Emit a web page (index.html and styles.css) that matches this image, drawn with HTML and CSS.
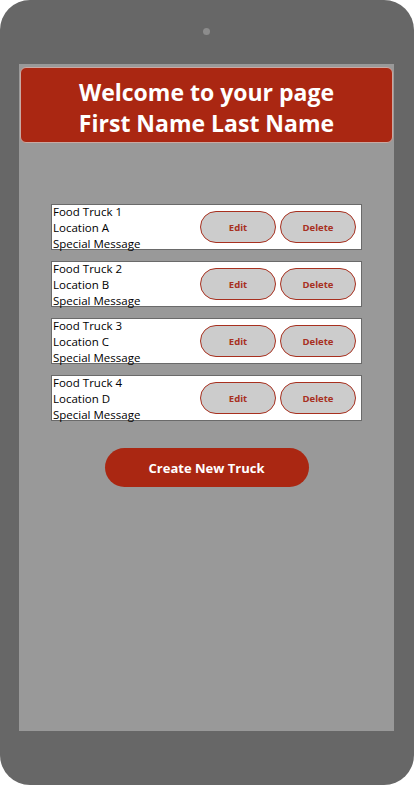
FILE: index.html
```html
<!DOCTYPE html>
<html>
<head>
<meta charset="utf-8">
<link rel="stylesheet" href="styles.css">
</head>
<body>
<div class="device">
  <div class="camera"></div>
  <div class="screen">
    <div class="header">
      <div class="title">Welcome to your page</div>
      <div class="title">First Name Last Name</div>
    </div>
    <div class="list">
      <div class="card">
        <div class="info"><div>Food Truck 1</div><div>Location A</div><div>Special Message</div></div>
        <div class="actions"><button class="pill">Edit</button><button class="pill">Delete</button></div>
      </div>
      <div class="card">
        <div class="info"><div>Food Truck 2</div><div>Location B</div><div>Special Message</div></div>
        <div class="actions"><button class="pill">Edit</button><button class="pill">Delete</button></div>
      </div>
      <div class="card">
        <div class="info"><div>Food Truck 3</div><div>Location C</div><div>Special Message</div></div>
        <div class="actions"><button class="pill">Edit</button><button class="pill">Delete</button></div>
      </div>
      <div class="card">
        <div class="info"><div>Food Truck 4</div><div>Location D</div><div>Special Message</div></div>
        <div class="actions"><button class="pill">Edit</button><button class="pill">Delete</button></div>
      </div>
    </div>
    <button class="create">Create New Truck</button>
  </div>
</div>
</body>
</html>
```
FILE: styles.css
```css
html, body {
  margin: 0;
  padding: 0;
  background: #ffffff;
}
body {
  font-family: "Open Sans", "Noto Sans", sans-serif;
}
.device {
  width: 414px;
  height: 785px;
  box-sizing: border-box;
  background: #676767;
  border-radius: 30px;
  padding: 28px 20px 0 19px;
  display: flex;
  flex-direction: column;
}
.camera {
  width: 7px;
  height: 7px;
  border-radius: 50%;
  background: #8c8c8c;
  margin: 0 auto;
}
.screen {
  margin-top: 29px;
  height: 667px;
  background: #999999;
  box-sizing: border-box;
  padding: 3px 1px 0 1px;
  display: flex;
  flex-direction: column;
  align-items: center;
}
.header {
  width: 373px;
  height: 76px;
  box-sizing: border-box;
  background: #aa2712;
  border: 1px solid #c9a9a3;
  border-radius: 6px;
  padding-top: 5px;
  display: flex;
  flex-direction: column;
  justify-content: center;
  align-items: center;
  color: #ffffff;
  font-weight: 700;
  font-size: 23px;
  line-height: 31px;
}
.list {
  margin-top: 61px;
  display: flex;
  flex-direction: column;
  gap: 11px;
}
.card {
  width: 311px;
  height: 46px;
  box-sizing: border-box;
  background: #ffffff;
  border: 1px solid #6a6a6a;
  display: flex;
  align-items: center;
  justify-content: space-between;
  padding: 0 5px 0 1px;
}
.info {
  font-size: 11.5px;
  line-height: 16px;
  color: #000000;
  align-self: stretch;
  display: flex;
  flex-direction: column;
  justify-content: center;
  padding-top: 1px;
}
.actions {
  display: flex;
  gap: 4px;
}
.pill {
  width: 76px;
  height: 32px;
  box-sizing: border-box;
  background: #cccccc;
  border: 1px solid #a8301f;
  border-radius: 16px;
  color: #a8301f;
  font-family: "Open Sans", "Noto Sans", sans-serif;
  font-weight: 700;
  font-size: 9.5px;
  padding: 0;
}
.create {
  margin-top: 27px;
  width: 204px;
  height: 39px;
  border: none;
  border-radius: 20px;
  background: #aa2712;
  color: #ffffff;
  font-family: "Open Sans", "Noto Sans", sans-serif;
  font-weight: 700;
  font-size: 13px;
  padding: 0;
}
```
